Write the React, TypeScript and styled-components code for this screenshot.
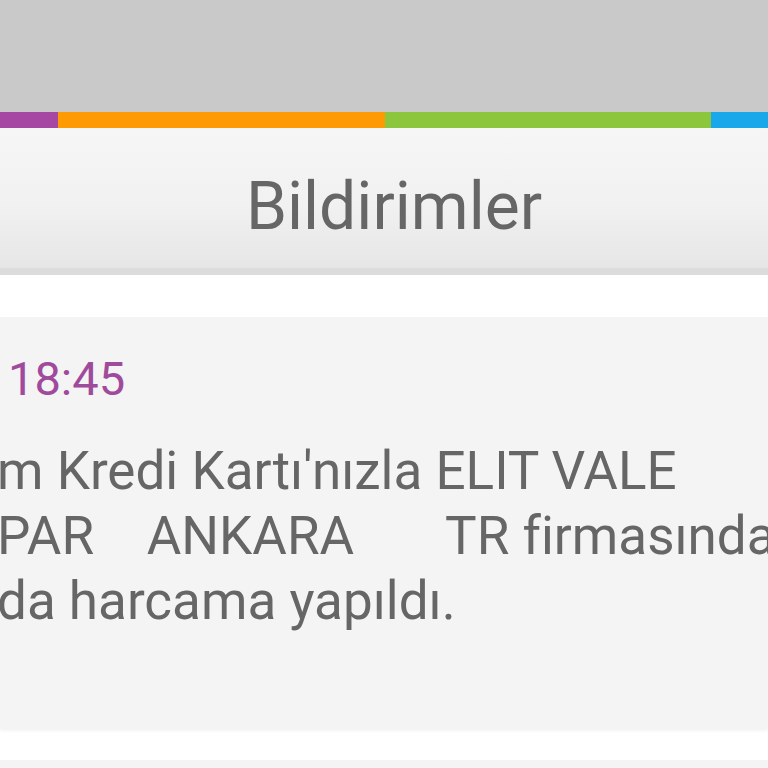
import React from 'react';
import styled, { createGlobalStyle } from 'styled-components';

const GlobalStyle = createGlobalStyle`
  html, body {
    margin: 0;
    padding: 0;
    background: #ffffff;
  }
  body {
    font-family: Roboto, 'Liberation Sans', sans-serif;
  }
`;

// üst renk şeridi
const stripes = [
  { color: '#a647a3', width: 58 },
  { color: '#fd9a04', width: 327 },
  { color: '#8bc63c', width: 326 },
  { color: '#19a8e9', width: 57 },
];

const notification = {
  time: '18:45',
  lines: [
    "m Kredi Kartı'nızla ELIT VALE",
    'PAR    ANKARA       TR firmasında',
    'da harcama yapıldı.',
  ],
};

const Screen = styled.div`
  width: 768px;
  height: 768px;
  overflow: hidden;
  display: flex;
  flex-direction: column;
`;

const StatusArea = styled.div`
  height: 112px;
  flex-shrink: 0;
  background: #c9c9c9;
`;

const ColorStrip = styled.div`
  height: 16px;
  flex-shrink: 0;
  display: flex;
`;

const Stripe = styled.div<{ $color: string; $width: number }>`
  flex: 0 0 ${p => p.$width}px;
  background: ${p => p.$color};
`;

const Header = styled.div`
  height: 124px;
  flex-shrink: 0;
  display: flex;
  align-items: center;
  justify-content: center;
  padding: 16px 0 0 20px;
  background: linear-gradient(#f6f6f6 0%, #f1f1f1 55%, #e6e6e6 100%);
  border-bottom: 7px solid #dcdcdc;
`;

const Title = styled.h1`
  margin: 0;
  font-family: Roboto, 'Liberation Sans', sans-serif;
  font-weight: 400;
  font-size: 66px;
  color: #666666;
`;

const List = styled.div`
  display: flex;
  flex-direction: column;
  gap: 31px;
  padding-top: 42px;
`;

const Card = styled.div<{ $height: number }>`
  height: ${p => p.$height}px;
  flex-shrink: 0;
  overflow: hidden;
  background: #f4f4f4;
  box-shadow: 0 2px 3px rgba(0, 0, 0, 0.05);
`;

const Time = styled.p`
  margin: 26px 0 0 8px;
  font-size: 47px;
  line-height: 72px;
  color: #a04a9c;
`;

const Message = styled.p`
  margin: 24px 0 0 -3px;
  font-size: 53px;
  line-height: 65px;
  color: #666666;
  white-space: pre;
  font-variant-ligatures: none;
`;

const Line = styled.span`
  display: block;
`;

const App = () => {
  return (
    <>
      <GlobalStyle />
      <Screen lang="tr">
        <StatusArea />
        <ColorStrip>
          {stripes.map(s => (
            <Stripe key={s.color} $color={s.color} $width={s.width} />
          ))}
        </ColorStrip>
        <Header>
          <Title>Bildirimler</Title>
        </Header>
        <List>
          <Card $height={412}>
            <Time>{notification.time}</Time>
            <Message>
              {notification.lines.map(line => (
                <Line key={line}>{line}</Line>
              ))}
            </Message>
          </Card>
          <Card $height={200} />
        </List>
      </Screen>
    </>
  );
};

export default App;
